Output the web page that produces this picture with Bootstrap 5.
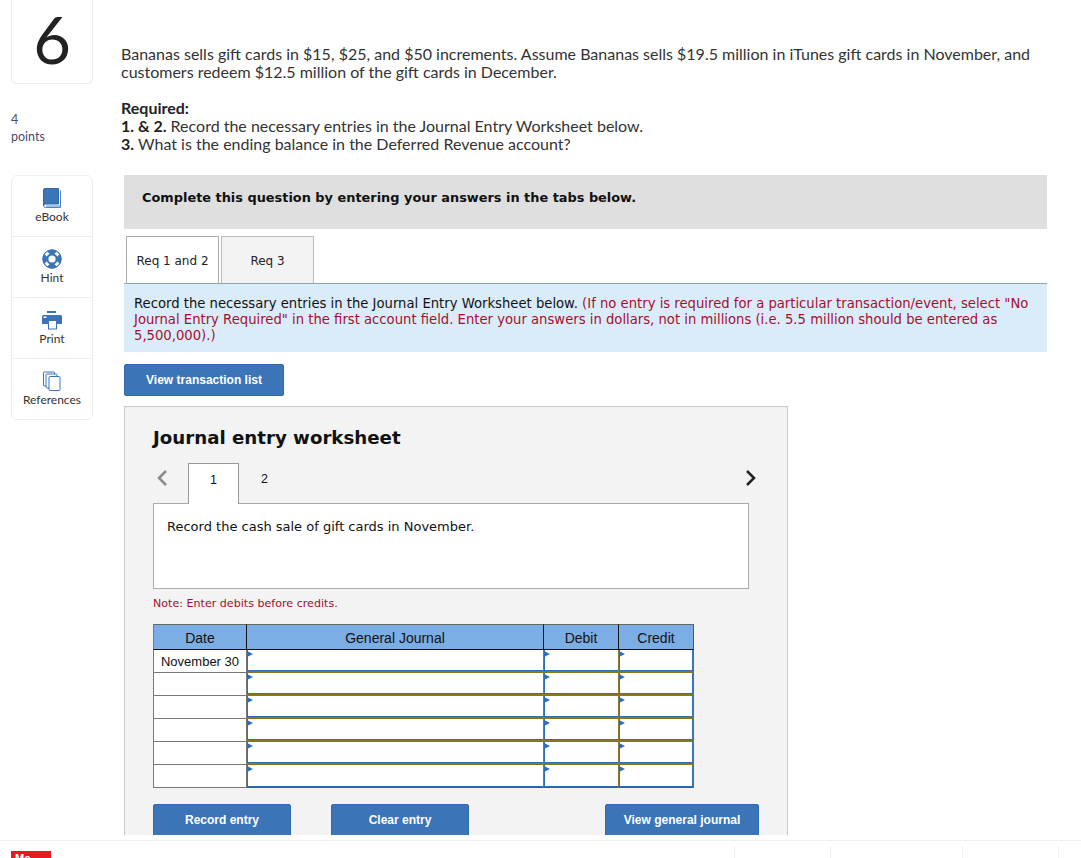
<!DOCTYPE html>
<html lang="en">
<head>
<meta charset="utf-8">
<title>Question 6</title>
<link rel="stylesheet" href="https://cdn.jsdelivr.net/npm/bootstrap@5.3.0/dist/css/bootstrap.min.css">
<style>
html,body{height:858px;overflow:hidden;background:#fff}
body{font-family:"Lato","Liberation Sans",sans-serif;color:#333}
.page-clip{height:835px;overflow:hidden;padding-left:11px}
.side-col{width:82px;flex:none}
.qnum{height:84px;border:1px solid #eee;border-top:0;border-radius:0 0 6px 6px;font-size:65px;line-height:78px;color:#222;text-align:center}
.pts{margin-top:27px;font-size:12.5px;line-height:17px;color:#4a4a6a;height:64px}
.pts span{display:block}
.tools{border:1px solid #eee;border-radius:6px;height:245px}
.tool-item{height:61px;border-bottom:1px solid #eee;font-size:12px;color:#333;text-align:center;padding-top:12px;line-height:14px}
.tool-item:last-child{border-bottom:0}
.tool-item svg{display:block;margin:0 auto 2px}
.main-col{margin-left:28px;width:926px;flex:none}
.qtext{padding-top:44.5px;font-size:16px;line-height:18px;color:#333;height:175px}
.qtext p{margin:0 0 18px}
.qtext b{color:#222}
.instr{margin-left:3px;height:54px;background:#dfdfdf;font:bold 12.9px/18px "DejaVu Sans",sans-serif;color:#111;padding:14px 18px}
.rtabs{margin:7px 0 0 5px;gap:2px;height:47px}
.rtab{width:93px;height:47px;border:1px solid #bbb;border-bottom:0;background:#f3f3f3;font:12px/48px "DejaVu Sans",sans-serif;color:#222;text-align:center}
.rtab.on{background:#fff;border-color:#aaa;position:relative;z-index:1}
.reqbox{margin-left:3px;background:#daecfa;border-top:1px solid #8aa;padding:11.5px 10px 6px;height:69px;font:13.2px/16px "DejaVu Sans",sans-serif;color:#111}
.reqbox em{font-style:normal;color:#a50f2d}
.mhbtn{background:#3b75b7;color:#fff;border:1px solid #2f6db0;border-radius:2px;font:bold 12px/30px "Liberation Sans",sans-serif;text-align:center;padding:0;height:32px}
.mhbtn:hover{background:#3b75b7;color:#fff}
.list-btn{margin:12px 0 10px 3px;width:160px;display:block}
.wsheet{margin-left:3px;width:664px;height:440px;background:#f3f3f3;border:1px solid #c8c8c8;border-bottom:0;padding:20px 28px 0}
.wsheet h2{font:bold 18.2px/22px "DejaVu Sans",sans-serif;color:#111;margin:0;height:36px}
.wtabs{height:41px;position:relative}
.wprev{width:35px;padding:6px 0 0 3px}
.wtab{width:51px;height:41px;font:12.5px/33px "Liberation Sans",sans-serif;color:#111;text-align:center}
.wtab.on{background:#fff;border:1px solid #999;border-bottom:0;position:relative;z-index:1}
.wnext{margin-left:auto;margin-right:2px;width:12px;padding-top:6px}
.qbox{width:596px;height:86px;background:#fff;border:1px solid #aaa;margin-top:-1px;padding:14px 13px;font:13px/18px "DejaVu Sans",sans-serif;color:#111}
.note{font:11.1px/14px "DejaVu Sans",sans-serif;color:#a50f2d;margin:8px 0 13px}
.jtable{border-collapse:separate;border-spacing:0;table-layout:fixed;width:541px;font:14px/18px "Liberation Sans",sans-serif;color:#111;background:#fff}
.jtable th{background:#7caee6;font-weight:400;text-align:center;height:26px;padding:2px 0 0;border-top:1px solid #666;border-bottom:1px solid #111;border-right:1px solid #111}
.jtable th:first-child{border-left:1px solid #777}
.jtable th:last-child{border-right:1px solid #2c5f96}
.jtable td{padding:0;height:23px}
.jtable td.dcell{border-left:1px solid #777;border-right:1px solid #777;border-bottom:1px solid #777;text-align:center;font-size:13px;line-height:21px;padding-top:1px}
.icell{position:relative;background:#fff;border-right:1px solid #8a7a30;border-bottom:2px solid #8c7619;box-shadow:inset 1px 0 0 #2f6fb5,inset 0 -1px 0 #2f6fb5}
.icell:last-child{border-right:2px solid #3b74b2}
tbody tr:last-child .icell{border-bottom:1px solid #2f5f90}
.icell::before{content:"";position:absolute;left:0;top:1px;border-left:6px solid #2a6ec0;border-top:3px solid transparent;border-bottom:3px solid transparent}
.wbtns{margin-top:16px;width:606px}
.wbtns .mhbtn{height:36px;line-height:30px;padding-bottom:4px}
.btn-rec{width:138px}
.btn-clr{width:138px;margin-left:40px}
.btn-view{width:154px}
.pagefoot{height:23px;border-top:1px solid #eee;margin-top:5px;position:relative;padding:10px 0 0 11px}
.mh-logo{display:block;width:40px;height:8px;background:#e31b23;color:#fff;font:bold 11px/14px "Liberation Sans",sans-serif;padding-left:4px;overflow:hidden}
.footsep{width:1px;height:13px;background:#f0f0f0;flex:none}
.footseps{position:absolute;right:22px;top:5px;height:13px;gap:0}
.sep-a{margin-right:95px}
.sep-b{margin-right:131px}
</style>
</head>
<body>
<div class="page-clip d-flex">
  <div class="side-col">
    <div class="qnum">6</div>
    <div class="pts"><span>4</span><span>points</span></div>
    <div class="tools">
      <div class="tool-item">
        <svg width="18" height="20" viewBox="0 0 18 20"><path d="M.5 2A1.500 1.500 0 0 1 2 .5h13.500v15.500H2.500A2 2 0 0 0 .5 18z" fill="#3b75b7" stroke="#2f68a8"/><path d="M.5 17.500A2 2 0 0 0 2.500 19.500h15V2.500M3 18h14.500" fill="none" stroke="#4a84c4"/></svg>
        eBook
      </div>
      <div class="tool-item">
        <svg width="20" height="20" viewBox="0 0 20 20"><circle cx="10" cy="10" r="9.500" fill="#3b75b7"/><path d="M3.800 3.800 16.200 16.200M16.200 3.800 3.800 16.200" stroke="#fff" stroke-width="4"/><circle cx="10" cy="10" r="9.200" fill="none" stroke="#3b75b7" stroke-width="1"/><circle cx="10" cy="10" r="5.800" fill="#3b75b7"/><circle cx="10" cy="10" r="3.600" fill="#fff"/></svg>
        Hint
      </div>
      <div class="tool-item">
        <svg width="20" height="20" viewBox="0 0 20 20"><path d="M5 1h9v2H5z" fill="#3b75b7"/><path d="M1.500 5h17A1.500 1.500 0 0 1 20 6.500V14H0V6.500A1.500 1.500 0 0 1 1.500 5z" fill="#3b75b7"/><rect x="1.500" y="6.500" width="3" height="1.500" fill="#fff"/><rect x="6.500" y="10.500" width="8" height="8.500" fill="#fff" stroke="#3b75b7"/></svg>
        Print
      </div>
      <div class="tool-item">
        <svg width="20" height="20" viewBox="0 0 20 20" fill="#fff" stroke="#3b75b7"><rect x="1.500" y="1" width="11" height="14" rx="1"/><rect x="4" y="3" width="11" height="14" rx="1"/><rect x="7" y="5.500" width="11" height="14" rx="1"/></svg>
        References
      </div>
    </div>
  </div>
  <div class="main-col">
    <div class="qtext">
      <p>Bananas sells gift cards in $15, $25, and $50 increments. Assume Bananas sells $19.5 million in iTunes gift cards in November, and customers redeem $12.5 million of the gift cards in December.</p>
      <p><b>Required:</b><br><b>1. &amp; 2.</b> Record the necessary entries in the Journal Entry Worksheet below.<br><b>3.</b> What is the ending balance in the Deferred Revenue account?</p>
    </div>
    <div class="instr">Complete this question by entering your answers in the tabs below.</div>
    <div class="rtabs d-flex">
      <div class="rtab on">Req 1 and 2</div>
      <div class="rtab">Req 3</div>
    </div>
    <div class="reqbox">Record the necessary entries in the Journal Entry Worksheet below. <em>(If no entry is required for a particular transaction/event, select "No Journal Entry Required" in the first account field. Enter your answers in dollars, not in millions (i.e. 5.5 million should be entered as 5,500,000).)</em></div>
    <button type="button" class="btn mhbtn list-btn">View transaction list</button>
    <div class="wsheet">
      <h2>Journal entry worksheet</h2>
      <div class="wtabs d-flex">
        <div class="wprev"><svg class="d-block" width="12" height="18" viewBox="0 0 12 18"><path d="M10 2 3 9l7 7" fill="none" stroke="#8a8a8a" stroke-width="2.500"/></svg></div>
        <div class="wtab on">1</div>
        <div class="wtab">2</div>
        <div class="wnext"><svg class="d-block" width="12" height="18" viewBox="0 0 12 18"><path d="M2 2l7 7-7 7" fill="none" stroke="#222" stroke-width="2.500"/></svg></div>
      </div>
      <div class="qbox">Record the cash sale of gift cards in November.</div>
      <div class="note">Note: Enter debits before credits.</div>
      <table class="jtable">
        <colgroup><col style="width:94px"><col style="width:297px"><col style="width:75px"><col style="width:75px"></colgroup>
        <thead><tr><th>Date</th><th>General Journal</th><th>Debit</th><th>Credit</th></tr></thead>
        <tbody>
          <tr><td class="dcell">November 30</td><td class="icell"></td><td class="icell"></td><td class="icell"></td></tr>
          <tr><td class="dcell"></td><td class="icell"></td><td class="icell"></td><td class="icell"></td></tr>
          <tr><td class="dcell"></td><td class="icell"></td><td class="icell"></td><td class="icell"></td></tr>
          <tr><td class="dcell"></td><td class="icell"></td><td class="icell"></td><td class="icell"></td></tr>
          <tr><td class="dcell"></td><td class="icell"></td><td class="icell"></td><td class="icell"></td></tr>
          <tr><td class="dcell"></td><td class="icell"></td><td class="icell"></td><td class="icell"></td></tr>
        </tbody>
      </table>
      <div class="wbtns d-flex">
        <button type="button" class="btn mhbtn btn-rec">Record entry</button>
        <button type="button" class="btn mhbtn btn-clr">Clear entry</button>
        <button type="button" class="btn mhbtn btn-view ms-auto">View general journal</button>
      </div>
    </div>
  </div>
</div>
<div class="pagefoot">
  <span class="mh-logo">Mc</span>
  <div class="footseps d-flex">
    <div class="footsep sep-a"></div>
    <div class="footsep sep-b"></div>
    <div class="footsep sep-a"></div>
    <div class="footsep"></div>
  </div>
</div>
<script src="https://cdn.jsdelivr.net/npm/bootstrap@5.3.0/dist/js/bootstrap.bundle.min.js"></script>
</body>
</html>
